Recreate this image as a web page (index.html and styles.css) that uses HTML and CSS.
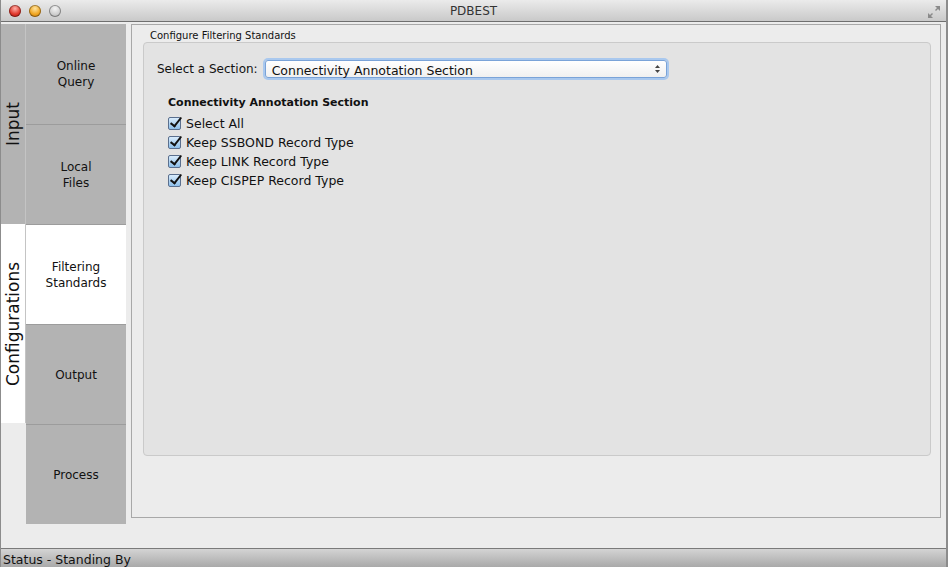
FILE: index.html
```html
<!DOCTYPE html>
<html lang="en">
<head>
    <meta charset="UTF-8">
    <title>PDBEST</title>
    <link rel="stylesheet" href="styles.css">
</head>
<body>

<div class="window">
    <div class="titlebar">
        <div class="lights">
            <span class="light red"></span>
            <span class="light yellow"></span>
            <span class="light grey"></span>
        </div>
        <div class="title">PDBEST</div>
        <svg class="zoom-icon" width="14" height="14" viewBox="0 0 14 14">
            <path d="M8 1h5v5l-2-2-2 2-1-1 2-2z" fill="#8a8a8a"/>
            <path d="M6 13H1V8l2 2 2-2 1 1-2 2z" fill="#8a8a8a"/>
        </svg>
    </div>

    <div class="main">
        <div class="groups">
            <div class="group group-input"><span>Input</span></div>
            <div class="group group-config"><span>Configurations</span></div>
        </div>

        <div class="tabs">
            <div class="tab">Online<br>Query</div>
            <div class="tab">Local<br>Files</div>
            <div class="tab active">Filtering<br>Standards</div>
            <div class="tab">Output</div>
            <div class="tab">Process</div>
        </div>

        <div class="panel">
            <div class="panel-title">Configure Filtering Standards</div>
            <div class="groupbox">
                <div class="section-row">
                    <label class="section-label">Select a Section:</label>
                    <div class="combo">
                        <span>Connectivity Annotation Section</span>
                        <svg width="7" height="10" viewBox="0 0 7 10">
                            <path d="M3.5 1L6 4H1z" fill="#444"/>
                            <path d="M3.5 9L6 6H1z" fill="#444"/>
                        </svg>
                    </div>
                </div>

                <div class="checks">
                    <div class="checks-title">Connectivity Annotation Section</div>
                    <div class="check"><span class="box"></span>Select All</div>
                    <div class="check"><span class="box"></span>Keep SSBOND Record Type</div>
                    <div class="check"><span class="box"></span>Keep LINK Record Type</div>
                    <div class="check"><span class="box"></span>Keep CISPEP Record Type</div>
                </div>
            </div>
        </div>
    </div>

    <div class="statusbar">Status - Standing By</div>
</div>

</body>
</html>
```

FILE: styles.css
```css
body {
    margin: 0;
    font-family: 'DejaVu Sans', 'Liberation Sans', sans-serif;
    background: #ececec;
    color: #111;
}

.window {
    width: 948px;
    height: 567px;
    display: flex;
    flex-direction: column;
    background: #ececec;
    box-sizing: border-box;
    border-left: 1px solid #8c8c8c;
    border-right: 2px solid #8c8c8c;
    overflow: hidden;
}

.titlebar {
    height: 22px;
    flex-shrink: 0;
    display: flex;
    align-items: center;
    position: relative;
    background: linear-gradient(to bottom, #ebebeb, #c9c9c9);
    border-bottom: 1px solid #6f6f6f;
    box-sizing: border-box;
}

.lights {
    display: flex;
    gap: 8px;
    padding-left: 8px;
}

.light {
    width: 12px;
    height: 12px;
    border-radius: 50%;
    box-shadow: inset 0 0 0 1px rgba(0, 0, 0, 0.35);
}

.light.red {
    background: radial-gradient(circle at 50% 30%, #ffb0a8, #e0372c 55%, #a8160e);
}

.light.yellow {
    background: radial-gradient(circle at 50% 30%, #ffe4a0, #f0a520 55%, #b86e0a);
}

.light.grey {
    background: radial-gradient(circle at 50% 30%, #f4f4f4, #cfcfcf 55%, #a6a6a6);
}

.title {
    position: absolute;
    left: 0;
    right: 0;
    text-align: center;
    font-size: 12px;
    color: #333;
}

.zoom-icon {
    position: absolute;
    right: 5px;
    top: 5px;
}

.main {
    flex: 1;
    display: flex;
    padding-top: 2px;
    min-height: 0;
}

.groups {
    width: 25px;
    display: flex;
    flex-direction: column;
}

.group {
    height: 199px;
    display: flex;
    align-items: center;
    justify-content: center;
    border-right: 1px solid #c4c4c4;
}

.group span {
    transform: rotate(-90deg);
    white-space: nowrap;
    font-size: 17px;
}

.group-input {
    height: 200px;
    background: #b3b3b3;
}

.group-config {
    background: #ffffff;
}

.tabs {
    width: 100px;
    display: flex;
    flex-direction: column;
}

.tab {
    height: 99px;
    background: #b3b3b3;
    border-bottom: 1px solid #9c9c9c;
    display: flex;
    align-items: center;
    justify-content: center;
    text-align: center;
    font-size: 12px;
    line-height: 16px;
}

.tab:first-child {
    height: 100px;
}

.tab:last-child {
    border-bottom: none;
}

.tab.active {
    background: #ffffff;
}

.panel {
    width: 810px;
    height: 494px;
    margin-left: 5px;
    border: 1px solid #a8a8a8;
    background: #ececec;
    padding: 4px 11px 0 11px;
    box-sizing: border-box;
}

.panel-title {
    font-size: 10px;
    padding-left: 7px;
    height: 13px;
    line-height: 13px;
}

.groupbox {
    height: 414px;
    width: 788px;
    box-sizing: border-box;
    background: #e3e3e3;
    border: 1px solid #cacaca;
    border-radius: 4px;
    padding: 16px 13px 0 13px;
}

.section-row {
    display: flex;
    align-items: center;
    gap: 7px;
    padding-top: 1px;
}

.section-label {
    font-size: 12px;
}

.combo {
    width: 402px;
    height: 18px;
    box-sizing: border-box;
    display: flex;
    align-items: center;
    justify-content: space-between;
    padding: 2px 5px 0 6px;
    font-size: 12.5px;
    background: linear-gradient(to bottom, #ffffff, #f0f0f0);
    border: 1px solid #7aa3d8;
    border-radius: 3px;
    box-shadow: 0 0 0 2px #a9c8ee;
}

.combo svg {
    margin-top: -2px;
}

.checks {
    margin-top: 17px;
    padding-left: 11px;
}

.checks-title {
    font-size: 11px;
    font-weight: bold;
    height: 19px;
    line-height: 15px;
}

.check {
    display: flex;
    align-items: center;
    font-size: 12.5px;
    height: 19px;
}

.box {
    width: 13px;
    height: 13px;
    margin-right: 5px;
    box-sizing: border-box;
    border: 1px solid #5a6f8e;
    border-radius: 2px;
    background: linear-gradient(to bottom, #d9ecfc, #8dbfea);
    position: relative;
}

.box::after {
    content: '';
    position: absolute;
    left: 4px;
    top: -3px;
    width: 4px;
    height: 10px;
    border-right: 2.5px solid #111;
    border-bottom: 2.5px solid #111;
    transform: rotate(38deg);
}

.statusbar {
    height: 19px;
    flex-shrink: 0;
    box-sizing: border-box;
    border-top: 1px solid #7a7a7a;
    background: linear-gradient(to bottom, #d4d4d4, #a9a9a9);
    font-size: 12.5px;
    line-height: 22px;
    padding-left: 2px;
}
```
